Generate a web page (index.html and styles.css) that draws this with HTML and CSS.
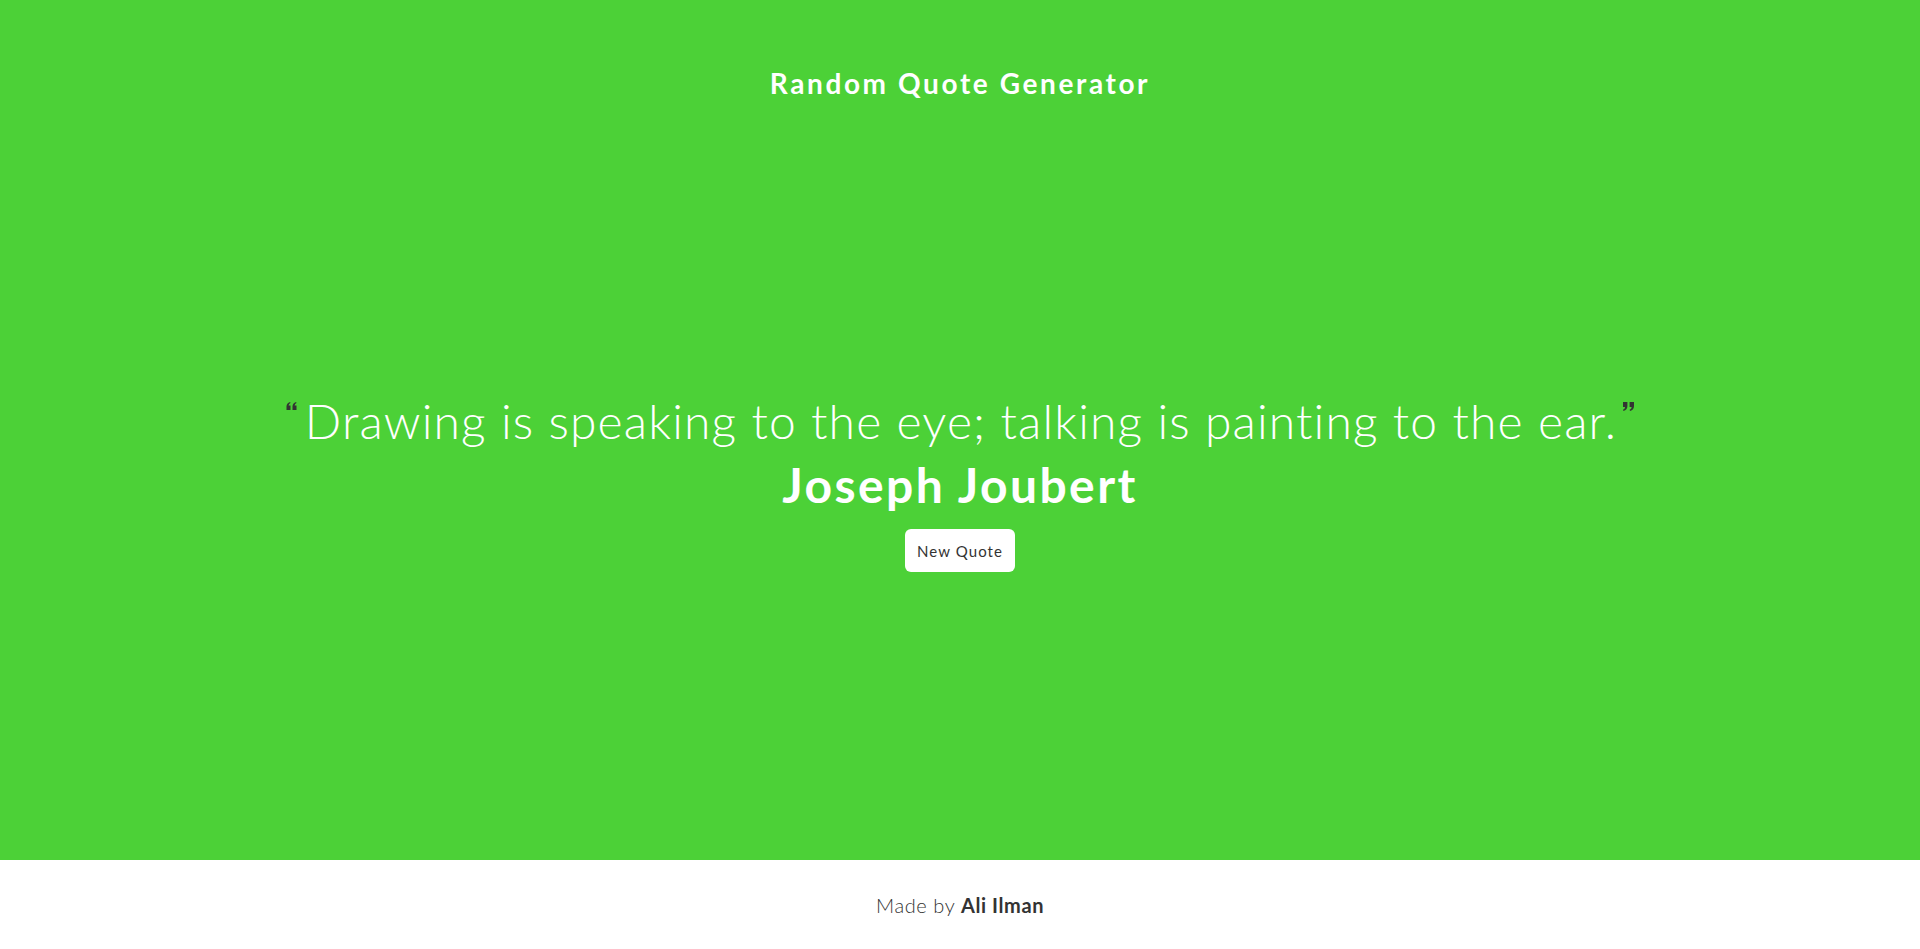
FILE: index.html
```html
<!DOCTYPE html>
<html lang="en">
<head>
<meta charset="utf-8">
<title>Random Quote Generator</title>
<link rel="stylesheet" href="styles.css">
</head>
<body>
<div class="page">
  <header class="header">
    <h1 class="title">Random Quote Generator</h1>
  </header>
  <main class="main">
    <div class="quote-box">
      <p class="quote"><svg class="mark mark-open" viewBox="0 0 10 8" width="11" height="8" aria-hidden="true"><path d="M0 8V4.5Q0 1 3.6 0L4 1.1Q2.2 1.8 2.1 3.6H4V8Z"/><path d="M6 8V4.5Q6 1 9.6 0L10 1.1Q8.2 1.8 8.1 3.6H10V8Z"/></svg>Drawing is speaking to the eye; talking is painting to the ear.<svg class="mark mark-close" viewBox="0 0 10 8" width="11" height="9" aria-hidden="true"><path d="M10 0V3.5Q10 7 6.4 8L6 6.9Q7.8 6.2 7.9 4.4H6V0Z"/><path d="M4 0V3.5Q4 7 0.4 8L0 6.9Q1.8 6.2 1.9 4.4H0V0Z"/></svg></p>
      <p class="author">Joseph Joubert</p>
      <button class="btn">New Quote</button>
    </div>
  </main>
</div>
<footer class="footer">
  <p>Made by <strong>Ali Ilman</strong></p>
</footer>
</body>
</html>
```

FILE: styles.css
```css
html, body {
  margin: 0;
  padding: 0;
}
body {
  font-family: "Lato", "Open Sans", sans-serif;
  background: #ffffff;
}
.page {
  background: #4cd137;
  height: 860px;
  display: flex;
  flex-direction: column;
  color: #ffffff;
}
.header {
  padding-top: 63px;
  text-align: center;
}
.title {
  margin: 0;
  font-size: 28px;
  font-weight: 700;
  line-height: 40px;
  letter-spacing: 2.6px;
}
.main {
  flex: 1;
  display: flex;
  align-items: center;
  justify-content: center;
}
.quote-box {
  display: flex;
  flex-direction: column;
  align-items: center;
  margin-top: -2px;
}
.quote {
  margin: 0;
  font-size: 48px;
  font-weight: 300;
  line-height: 64px;
  letter-spacing: 1.15px;
}
.mark {
  fill: #333333;
}
.mark-open {
  margin-right: 8px;
  vertical-align: 29px;
}
.mark-close {
  margin-left: 6px;
  vertical-align: 28px;
}
.author {
  margin: 0;
  font-size: 48px;
  font-weight: 700;
  line-height: 64px;
  letter-spacing: 2.4px;
}
.btn {
  margin-top: 12px;
  width: 110px;
  height: 43px;
  border: none;
  border-radius: 6px;
  background: #ffffff;
  color: #333333;
  font-family: "Lato", "Open Sans", sans-serif;
  font-size: 15px;
  letter-spacing: 1.1px;
  cursor: pointer;
}
.footer {
  height: 89px;
  display: flex;
  align-items: center;
  justify-content: center;
  color: #333333;
  font-size: 20px;
  font-weight: 300;
  letter-spacing: 0.6px;
}
.footer p {
  margin: 0;
}
.footer strong {
  font-weight: 700;
}
```
